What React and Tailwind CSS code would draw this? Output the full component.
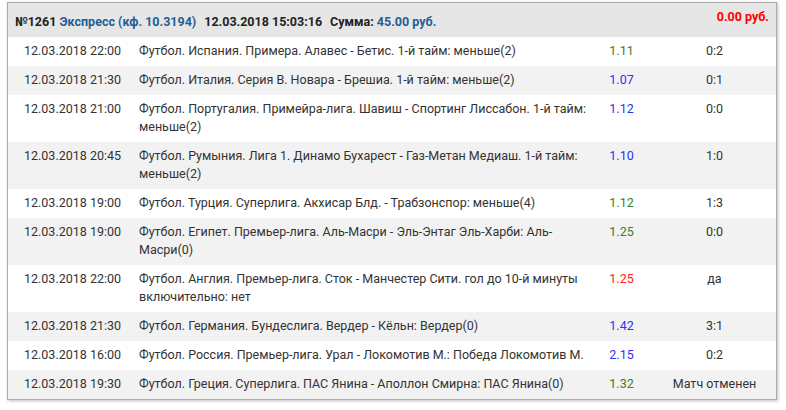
import React from "react";

const rows = [
  ["12.03.2018 22:00", "Футбол. Испания. Примера. Алавес - Бетис. 1-й тайм: меньше(2)", "1.11", "g", "0:2"],
  ["12.03.2018 21:30", "Футбол. Италия. Серия B. Новара - Брешиа. 1-й тайм: меньше(2)", "1.07", "b", "0:1"],
  ["12.03.2018 21:00", "Футбол. Португалия. Примейра-лига. Шавиш - Спортинг Лиссабон. 1-й тайм: меньше(2)", "1.12", "b", "0:0"],
  ["12.03.2018 20:45", "Футбол. Румыния. Лига 1. Динамо Бухарест - Газ-Метан Медиаш. 1-й тайм: меньше(2)", "1.10", "b", "1:0"],
  ["12.03.2018 19:00", "Футбол. Турция. Суперлига. Акхисар Блд. - Трабзонспор: меньше(4)", "1.12", "g", "1:3"],
  ["12.03.2018 19:00", "Футбол. Египет. Премьер-лига. Аль-Масри - Эль-Энтаг Эль-Харби: Аль-Масри(0)", "1.25", "g", "0:0"],
  ["12.03.2018 22:00", "Футбол. Англия. Премьер-лига. Сток - Манчестер Сити. гол до 10-й минуты включительно: нет", "1.25", "r", "да"],
  ["12.03.2018 21:30", "Футбол. Германия. Бундеслига. Вердер - Кёльн: Вердер(0)", "1.42", "b", "3:1"],
  ["12.03.2018 16:00", "Футбол. Россия. Премьер-лига. Урал - Локомотив М.: Победа Локомотив М.", "2.15", "b", "0:2"],
  ["12.03.2018 19:30", "Футбол. Греция. Суперлига. ПАС Янина - Аполлон Смирна: ПАС Янина(0)", "1.32", "g", "Матч отменен"],
];

const oddColor = {
  g: "text-[#3a7f2a]",
  b: "text-[#3030f0]",
  r: "text-[#ff2020]",
};

export default function App() {
  return (
    <div className="w-[786px] h-[410px] bg-white pt-[2px] pl-[7px] font-['Roboto',sans-serif]">
      <div className="w-[770px] border border-[#ababab] shadow-[1px_1px_3px_rgba(0,0,0,0.25)] bg-white">
        <div className="h-[34px] bg-[#e6e6e6] flex justify-between pl-[7px] pr-[7px] text-[12.5px] font-bold">
          <div className="pt-[10px] leading-[18px] text-[#222] whitespace-nowrap">
            <span>№1261 </span>
            <span className="text-[#1f5f96]">Экспресс (кф. 10.3194)</span>
            <span className="ml-[8px]">12.03.2018 15:03:16</span>
            <span className="ml-[8px]">Сумма: </span>
            <span className="text-[#1f5f96]">45.00 руб.</span>
          </div>
          <div className="pt-[5px] leading-[18px] text-[#ff0000]">0.00 руб.</div>
        </div>
        {rows.map((r, i) => (
          <div
            key={i}
            className={`grid grid-cols-[129px_453px_63px_123px] text-[12.5px] leading-[18px] text-[#333] pt-[5px] pb-[6px] ${
              i % 2 === 0 ? "bg-white" : "bg-[#f2f2f2]"
            }`}
          >
            <div className="text-center whitespace-nowrap">{r[0]}</div>
            <div className="pl-[2px] pr-[4px]">{r[1]}</div>
            <div className={`text-center ${oddColor[r[3]]}`}>{r[2]}</div>
            <div className="text-center">{r[4]}</div>
          </div>
        ))}
      </div>
    </div>
  );
}
